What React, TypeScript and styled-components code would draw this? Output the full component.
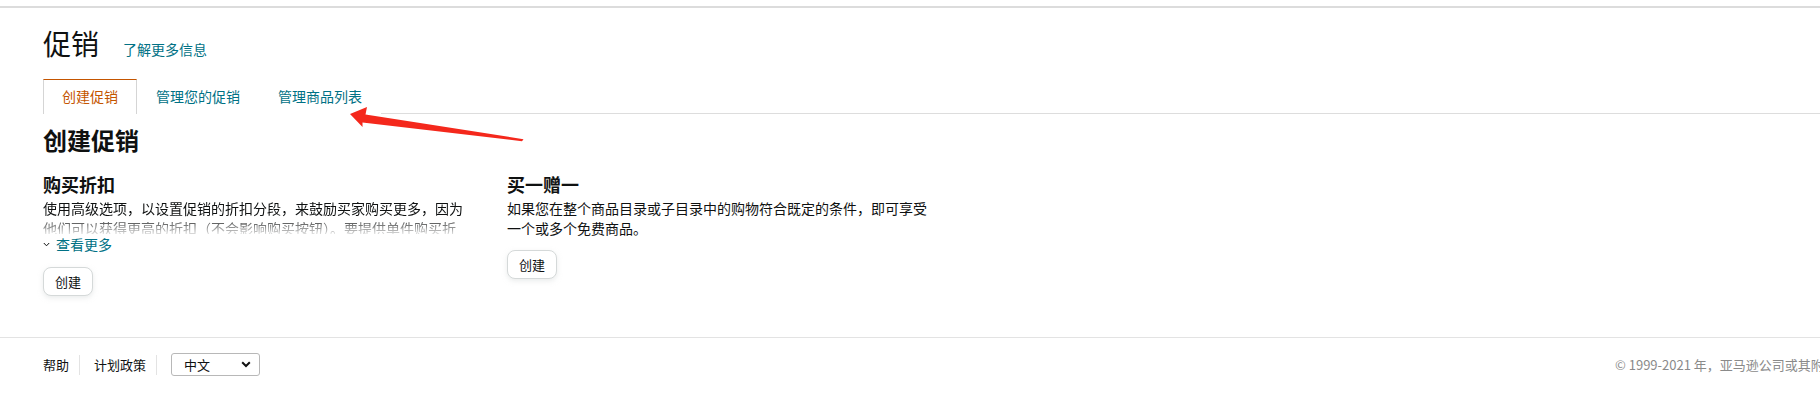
import React from 'react'
import styled, { createGlobalStyle } from 'styled-components'

const GlobalStyle = createGlobalStyle`
  html, body {
    margin: 0;
    padding: 0;
    background: #fff;
    overflow: hidden;
  }
  body {
    font-family: "Noto Sans CJK SC", "Noto Sans", sans-serif;
    color: #0f1111;
  }
`

const App = () => {
  return (
    <Page>
      <GlobalStyle />
      <TopBar />
      <Main>
        <TitleRow>
          <PageTitle>促销</PageTitle>
          <Link href="#">了解更多信息</Link>
        </TitleRow>
        <TabBar>
          <Tab $active>创建促销</Tab>
          <Tab>管理您的促销</Tab>
          <Tab>管理商品列表</Tab>
        </TabBar>
        <SectionTitle>创建促销</SectionTitle>
        <Cards>
          <Card>
            <CardTitle>购买折扣</CardTitle>
            <ClippedText>
              使用高级选项，以设置促销的折扣分段，来鼓励买家购买更多，因为他们可以获得更高的折扣（不会影响购买按钮）。要提供单件购买折扣，请使用其他促销类型。
            </ClippedText>
            <SeeMore href="#">
              <svg width="7" height="5" viewBox="0 0 7 5">
                <path d="M0.8 1 L3.5 3.8 L6.2 1" fill="none" stroke="#0f1111" strokeWidth="1" />
              </svg>
              查看更多
            </SeeMore>
            <Button $top={13}>创建</Button>
          </Card>
          <Card>
            <CardTitle>买一赠一</CardTitle>
            <CardText>如果您在整个商品目录或子目录中的购物符合既定的条件，即可享受一个或多个免费商品。</CardText>
            <Button $top={12}>创建</Button>
          </Card>
        </Cards>
      </Main>
      <Footer>
        <FooterLink>帮助</FooterLink>
        <FooterLink>计划政策</FooterLink>
        <LangSelect>
          <span>中文</span>
          <svg width="10" height="7" viewBox="0 0 10 7">
            <path d="M1.2 1.3 L5 5 L8.8 1.3" fill="none" stroke="#111" strokeWidth="2" />
          </svg>
        </LangSelect>
        <Copyright>© 1999-2021 年，亚马逊公司或其附属公司</Copyright>
      </Footer>
      {/* red annotation arrow drawn over the screenshot */}
      <Annotation width="1820" height="400" viewBox="0 0 1820 400">
        <polygon
          points="350,114 367,107 365.5,114.5 523.5,139.2 522,141.2 362.5,122.5 362.5,127"
          fill="#f4281c"
        />
      </Annotation>
    </Page>
  )
}

const Page = styled.div`
  position: relative;
  width: 1820px;
  height: 400px;
`

const TopBar = styled.div`
  height: 6px;
  border-bottom: 2px solid #dcdcdc;
`

const Main = styled.div`
  padding-left: 43px;
`

const TitleRow = styled.div`
  display: flex;
  align-items: baseline;
  gap: 24px;
  margin-top: 17px;
`

const PageTitle = styled.h1`
  margin: 0;
  font-size: 28px;
  line-height: 36px;
  font-weight: 400;
  color: #0f1111;
`

const Link = styled.a`
  font-size: 14px;
  color: #007185;
  text-decoration: none;
`

const TabBar = styled.div`
  display: flex;
  align-items: flex-end;
  margin-top: 18px;
  border-bottom: 1px solid #dddddd;
`

const Tab = styled.div<{ $active?: boolean }>`
  box-sizing: border-box;
  height: 35px;
  margin-bottom: -1px;
  padding: 0 18px;
  line-height: 33px;
  font-size: 14px;
  border: 1px solid ${p => (p.$active ? '#d5d5d5' : 'transparent')};
  border-top-color: ${p => (p.$active ? '#c45500' : 'transparent')};
  border-bottom: none;
  background: #fff;
  color: ${p => (p.$active ? '#c45500' : '#007185')};
  cursor: pointer;
`

const SectionTitle = styled.h2`
  margin: 10px 0 0;
  font-size: 24px;
  line-height: 32px;
  font-weight: 700;
`

const Cards = styled.div`
  display: grid;
  grid-template-columns: 430px 430px;
  column-gap: 34px;
  margin-top: 16px;
`

const Card = styled.div`
  display: flex;
  flex-direction: column;
  align-items: flex-start;
`

const CardTitle = styled.h3`
  margin: 0;
  font-size: 18px;
  line-height: 24px;
  font-weight: 700;
`

const CardText = styled.p`
  margin: 2px 0 0;
  font-size: 14px;
  line-height: 20px;
`

const ClippedText = styled(CardText)`
  height: 36px;
  overflow: hidden;
  -webkit-mask-image: linear-gradient(to bottom, #000 50%, rgba(0, 0, 0, 0.15) 100%);
  mask-image: linear-gradient(to bottom, #000 50%, rgba(0, 0, 0, 0.15) 100%);
`

const SeeMore = styled.a`
  display: flex;
  align-items: center;
  gap: 6px;
  font-size: 14px;
  line-height: 20px;
  color: #007185;
  text-decoration: none;
`

const Button = styled.button<{ $top: number }>`
  margin-top: ${p => p.$top}px;
  height: 29px;
  padding: 0 11px;
  font-family: inherit;
  font-size: 13px;
  color: #0f1111;
  background: #fff;
  border: 1px solid #d5d9d9;
  border-radius: 8px;
  box-shadow: 0 2px 5px rgba(213, 217, 217, 0.5);
  cursor: pointer;
`

const Footer = styled.footer`
  position: absolute;
  left: 0;
  right: 0;
  top: 337px;
  display: flex;
  align-items: center;
  padding: 15px 0 0 43px;
  border-top: 1px solid #e3e3e3;
`

const FooterLink = styled.span`
  padding-right: 10px;
  margin-right: 14px;
  border-right: 1px solid #e3e3e3;
  font-size: 13px;
  line-height: 20px;
  color: #0f1111;
`

const LangSelect = styled.div`
  box-sizing: border-box;
  display: flex;
  align-items: center;
  justify-content: space-between;
  width: 89px;
  height: 23px;
  padding: 0 8px 0 12px;
  border: 1px solid #b8b8b8;
  border-radius: 3px;
  font-size: 13px;
  color: #0f1111;
`

const Copyright = styled.span`
  margin-left: auto;
  width: 205px;
  white-space: nowrap;
  font-size: 13px;
  color: #8a8a8a;
`

const Annotation = styled.svg`
  position: absolute;
  top: 0;
  left: 0;
  pointer-events: none;
`

export default App
